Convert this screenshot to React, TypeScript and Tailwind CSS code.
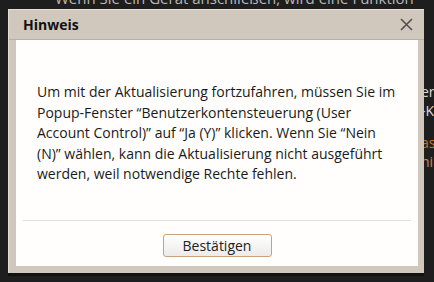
import React from 'react';

const bgLines = [
  { text: 'er', color: 'text-[#d8d8d8]' },
  { text: '-K', color: 'text-[#d8d8d8]' },
];

export default function App() {
  return (
    <div className="relative w-[434px] h-[282px] overflow-hidden bg-[#1e1e1e]" style={{ fontFamily: '"Open Sans", "Noto Sans", sans-serif' }}>
      {/* page behind the dialog */}
      <div className="mt-[-11px] pl-[55px] text-[15px] leading-[18px] text-[#b8b8b8] whitespace-nowrap">
        Wenn Sie ein Gerät anschließen, wird eine Funktion
      </div>
      <div className="mt-[75px] pl-[421px] flex flex-col text-[14px] leading-[19px] whitespace-nowrap">
        {bgLines.map((l) => (
          <div key={l.text} className={l.color}>{l.text}</div>
        ))}
        <div className="mt-[13px] text-[#c27330]">as</div>
        <div className="text-[#c98a52]">hi</div>
      </div>

      {/* dialog */}
      <div className="absolute left-[8px] top-[9px] w-[416px] h-[264px] flex flex-col bg-[#d0c8bc] border-t border-l border-[#e4ded4] shadow-[0_3px_0_#111]">
        <div className="h-[30px] flex items-center justify-between pl-[14px] pr-[11px] border-b border-[#b9b1a5]">
          <span className="text-[14px] font-bold text-[#111]">Hinweis</span>
          <svg width="13" height="13" viewBox="0 0 13 13" className="text-[#505050]">
            <path d="M1 1 L12 12 M12 1 L1 12" stroke="currentColor" strokeWidth="1.6" />
          </svg>
        </div>
        <div className="flex-1 ml-[7px] mr-[6px] mb-[7px] bg-[#fffefc] flex flex-col">
          <p className="pt-[42px] pl-[21px] text-[14px] leading-[20.5px] text-[#1a1a1a] whitespace-nowrap">
            Um mit der Aktualisierung fortzufahren, müssen Sie im<br />
            Popup-Fenster “Benutzerkontensteuerung (User<br />
            Account Control)” auf “Ja (Y)” klicken. Wenn Sie “Nein<br />
            (N)” wählen, kann die Aktualisierung nicht ausgeführt<br />
            werden, weil notwendige Rechte fehlen.
          </p>
          <div className="mt-auto mx-[7px] h-px bg-[#e2ded8]" />
          <div className="flex justify-center pt-[13px] pb-[9px]">
            <button className="w-[109px] h-[23px] rounded-[3px] border border-[#c9a27c] bg-gradient-to-b from-[#ffffff] to-[#ecebe9] text-[14px] leading-none text-[#222]">
              Bestätigen
            </button>
          </div>
        </div>
      </div>
    </div>
  );
}
